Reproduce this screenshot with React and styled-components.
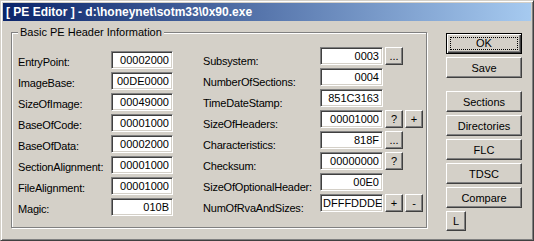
import styled, { createGlobalStyle } from 'styled-components';

const GlobalStyle = createGlobalStyle`
  html, body {
    margin: 0;
    padding: 0;
    background: #d4d0c8;
  }
  body {
    font-family: "Liberation Sans", Arial, sans-serif;
    font-size: 11px;
    color: #000;
  }
`;

const leftFields = [
  ['EntryPoint:', '00002000'],
  ['ImageBase:', '00DE0000'],
  ['SizeOfImage:', '00049000'],
  ['BaseOfCode:', '00001000'],
  ['BaseOfData:', '00002000'],
  ['SectionAlignment:', '00001000'],
  ['FileAlignment:', '00001000'],
  ['Magic:', '010B'],
];

const rightFields = [
  ['Subsystem:', '0003', ['...']],
  ['NumberOfSections:', '0004', []],
  ['TimeDateStamp:', '851C3163', []],
  ['SizeOfHeaders:', '00001000', ['?', '+']],
  ['Characteristics:', '818F', ['...']],
  ['Checksum:', '00000000', ['?']],
  ['SizeOfOptionalHeader:', '00E0', []],
  ['NumOfRvaAndSizes:', 'DFFFDDDE', ['+', '-']],
];

const sideButtons = ['Sections', 'Directories', 'FLC', 'TDSC', 'Compare'];

function App() {
  return (
    <>
      <GlobalStyle />
      <Window>
        <TitleBar>[ PE Editor ] - d:\honeynet\sotm33\0x90.exe</TitleBar>
        <Body>
          <Group>
            <Legend>Basic PE Header Information</Legend>
            <Columns>
              <FieldColumn $top={4}>
                {leftFields.map(([label, value]) => (
                  <Row key={label}>
                    <Label $width={93} $drop={2}>{label}</Label>
                    <Field $width={62}>{value}</Field>
                  </Row>
                ))}
              </FieldColumn>
              <FieldColumn $top={0} $left={30}>
                {rightFields.map(([label, value, extras]) => (
                  <Row key={label}>
                    <Label $width={117} $drop={5}>{label}</Label>
                    <Field $width={63}>{value}</Field>
                    {extras.map((x) => (
                      <SmallButton key={x} $dots={x === '...'}>{x}</SmallButton>
                    ))}
                  </Row>
                ))}
              </FieldColumn>
            </Columns>
          </Group>
          <ButtonColumn>
            <DefaultButton>
              <FocusRing>OK</FocusRing>
            </DefaultButton>
            <Button>Save</Button>
            <Spacer />
            {sideButtons.map((b) => (
              <Button key={b}>{b}</Button>
            ))}
            <Button $width={20} $height={20}>L</Button>
          </ButtonColumn>
        </Body>
      </Window>
    </>
  );
}

export default App;

const Window = styled.div`
  width: 534px;
  height: 241px;
  box-sizing: border-box;
  background: #d4d0c8;
  border-top: 1px solid #d4d0c8;
  border-left: 1px solid #d4d0c8;
  border-right: 1px solid #404040;
  border-bottom: 1px solid #404040;
  box-shadow: inset 1px 1px 0 #ffffff, inset -1px -1px 0 #808080;
  padding: 2px;
  display: flex;
  flex-direction: column;
`;

const TitleBar = styled.div`
  height: 18px;
  line-height: 18px;
  padding-left: 3px;
  background: linear-gradient(to right, #0a246a, #a6caf0);
  color: #ffffff;
  font-weight: 700;
  font-size: 12px;
  white-space: nowrap;
  overflow: hidden;
`;

const Body = styled.div`
  display: flex;
  padding: 5px 0 0 8px;
`;

const Group = styled.fieldset`
  margin: 0;
  width: 416px;
  height: 202px;
  box-sizing: border-box;
  padding: 8px 0 0 6px;
  border: 1px solid #808080;
  box-shadow: inset 1px 1px 0 #ffffff, 1px 1px 0 #ffffff;
  min-inline-size: 0;
`;

const Legend = styled.legend`
  margin-left: 0;
  padding: 0 2px;
  line-height: 13px;
  background: #d4d0c8;
`;

const Columns = styled.div`
  display: flex;
  align-items: flex-start;
`;

const FieldColumn = styled.div`
  display: flex;
  flex-direction: column;
  gap: 3px;
  margin-top: ${(p) => p.$top}px;
  margin-left: ${(p) => p.$left || 0}px;
`;

const Row = styled.div`
  display: flex;
  gap: 2px;
  height: 18px;
`;

const Label = styled.div`
  width: ${(p) => p.$width - 2}px;
  height: 18px;
  box-sizing: border-box;
  padding-top: ${(p) => p.$drop}px;
  line-height: 18px;
  white-space: nowrap;
  letter-spacing: -0.2px;
`;

const Field = styled.div`
  width: ${(p) => p.$width}px;
  height: 18px;
  box-sizing: border-box;
  background: #ffffff;
  border-top: 1px solid #808080;
  border-left: 1px solid #808080;
  border-right: 1px solid #ffffff;
  border-bottom: 1px solid #ffffff;
  box-shadow: inset 1px 1px 0 #404040, inset -1px -1px 0 #d4d0c8;
  padding: 0 3px 0 2px;
  line-height: 17px;
  text-align: right;
  white-space: nowrap;
  overflow: hidden;
`;

const raised = `
  box-sizing: border-box;
  background: #d4d0c8;
  border-top: 1px solid #ffffff;
  border-left: 1px solid #ffffff;
  border-right: 1px solid #404040;
  border-bottom: 1px solid #404040;
  box-shadow: inset -1px -1px 0 #808080;
  display: flex;
  align-items: center;
  justify-content: center;
  white-space: nowrap;
`;

const SmallButton = styled.div`
  ${raised}
  width: 18px;
  height: 18px;
  align-items: ${(p) => (p.$dots ? 'flex-end' : 'center')};
  padding-bottom: ${(p) => (p.$dots ? '4px' : '0')};
  line-height: ${(p) => (p.$dots ? '8px' : '16px')};
`;

const ButtonColumn = styled.div`
  display: flex;
  flex-direction: column;
  gap: 3px;
  margin-left: 19px;
  padding-top: 7px;
`;

const Button = styled.div`
  ${raised}
  width: ${(p) => p.$width || 76}px;
  height: ${(p) => p.$height || 21}px;
`;

const DefaultButton = styled.div`
  box-sizing: border-box;
  width: 76px;
  height: 21px;
  border: 1px solid #000000;
  box-shadow: inset 1px 1px 0 #ffffff, inset -1px -1px 0 #404040, inset -2px -2px 0 #808080;
  padding: 3px;
  display: flex;
`;

const FocusRing = styled.div`
  flex: 1;
  border: 1px dotted #000000;
  display: flex;
  align-items: center;
  justify-content: center;
  line-height: 11px;
`;

const Spacer = styled.div`
  height: 7px;
`;
